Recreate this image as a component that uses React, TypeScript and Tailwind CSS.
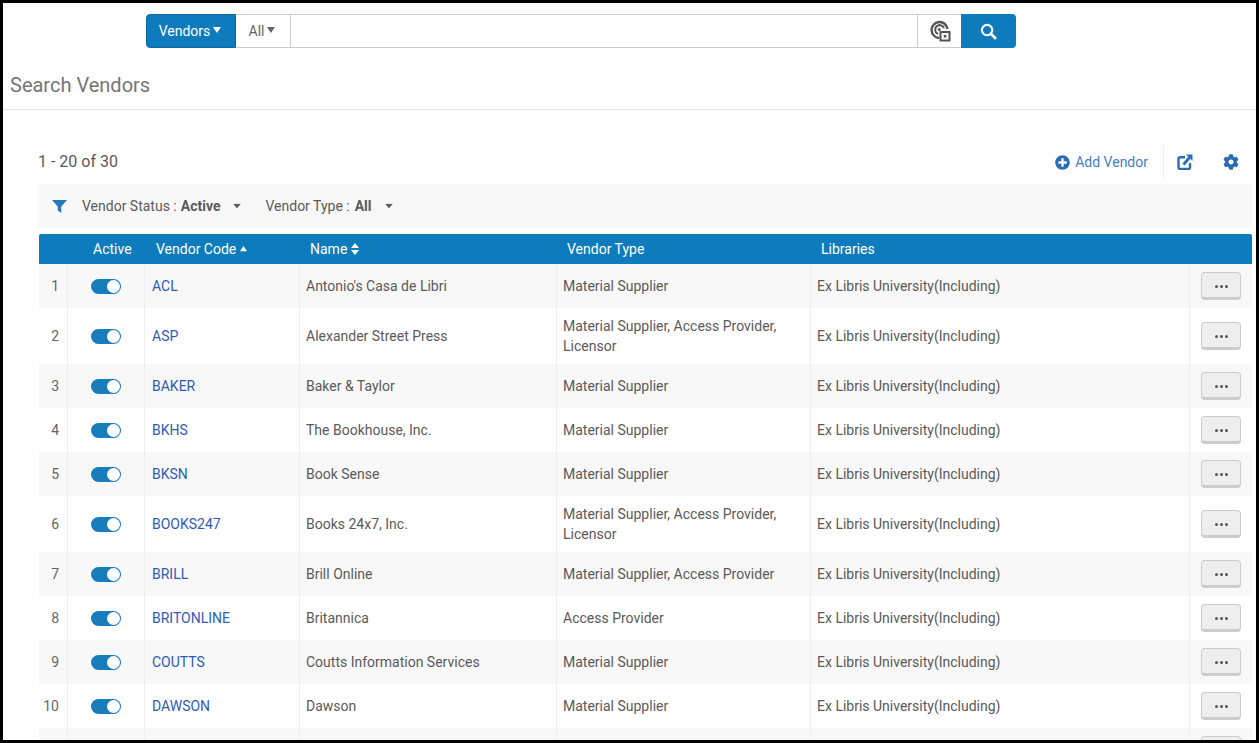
import React from "react";
import { FaCog, FaPlusCircle } from "react-icons/fa";

const rows: [string, string, string, string[], number][] = [
  ["1", "ACL", "Antonio's Casa de Libri", ["Material Supplier"], 44],
  ["2", "ASP", "Alexander Street Press", ["Material Supplier, Access Provider,", "Licensor"], 56],
  ["3", "BAKER", "Baker & Taylor", ["Material Supplier"], 44],
  ["4", "BKHS", "The Bookhouse, Inc.", ["Material Supplier"], 44],
  ["5", "BKSN", "Book Sense", ["Material Supplier"], 44],
  ["6", "BOOKS247", "Books 24x7, Inc.", ["Material Supplier, Access Provider,", "Licensor"], 56],
  ["7", "BRILL", "Brill Online", ["Material Supplier, Access Provider"], 44],
  ["8", "BRITONLINE", "Britannica", ["Access Provider"], 44],
  ["9", "COUTTS", "Coutts Information Services", ["Material Supplier"], 44],
  ["10", "DAWSON", "Dawson", ["Material Supplier"], 44],
  ["", "", "", [], 44],
];

const Caret = ({ className = "" }: { className?: string }) => (
  <svg viewBox="0 0 8 6" className={className} fill="currentColor"><path d="M0 0h8L4 6z" /></svg>
);

const cols = "grid grid-cols-[29px_77px_155px_257px_254px_379px_1fr]";

function Row({ r, i }: { r: (typeof rows)[number]; i: number }) {
  const [n, code, name, type, h] = r;
  const cell = "flex items-center border-r border-[#eeeeee] pl-[6px]";
  return (
    <div className={`${cols} ${i % 2 === 0 ? "bg-[#f8f8f8]" : "bg-white"} shrink-0`} style={{ height: h }}>
      <div className="flex items-center justify-end border-r border-[#eeeeee] pr-[8px] text-[#666666]">{n}</div>
      <div className="flex items-center justify-center border-r border-[#eeeeee] pr-[1px]">
        {code && (
          <div className="flex h-[15px] w-[30px] items-center justify-end rounded-full bg-[#1a7dbb] pr-[1px]">
            <div className="h-[13px] w-[13px] rounded-full bg-white" />
          </div>
        )}
      </div>
      <div className={`${cell} pl-[7px] text-[#2f5cb3]`}>{code}</div>
      <div className={cell}>{name}</div>
      <div className={`${cell} flex-col items-start justify-center leading-[20px]`}>
        {type.map((t) => (
          <div key={t}>{t}</div>
        ))}
      </div>
      <div className={cell}>{code && "Ex Libris University(Including)"}</div>
      <div className="flex items-center pl-[11px]">
        <button className="flex h-[28px] w-[40px] items-center justify-center gap-[2px] rounded-[4px] border border-b-[3px] border-[#cccccc] bg-[#eeeeee] pt-[2px]">
          {[0, 1, 2].map((d) => (
            <span key={d} className="h-[3px] w-[3px] rounded-full bg-[#555555]" />
          ))}
        </button>
      </div>
    </div>
  );
}

export default function App() {
  return (
    <div className="h-[743px] w-[1259px] overflow-hidden border-[3px] border-black bg-white font-['Roboto',sans-serif] text-[14px] text-[#5a5a5a]">
      <div className="flex h-[107px] flex-col border-b border-[#e3e3e3]">
        <div className="ml-[143px] mt-[11px] flex h-[34px] w-[870px] shrink-0">
          <div className="flex w-[90px] items-center justify-center gap-[3px] rounded-l-[4px] border border-[#0c6aa3] bg-[#0e7bbc] pr-[2px] text-white">
            Vendors
            <Caret className="mb-[3px] w-[8px]" />
          </div>
          <div className="flex w-[55px] items-center justify-center gap-[3px] border-y border-r border-[#cccccc] pr-[2px] text-[#666666]">
            All
            <Caret className="mb-[3px] w-[8px]" />
          </div>
          <div className="flex-1 border-y border-[#cccccc]" />
          <div className="flex w-[44px] items-center justify-center border-y border-l border-[#cccccc]">
            <svg viewBox="0 0 22 22" className="h-[22px] w-[22px]" fill="none" stroke="#555555">
              <path d="M10.5 18A8 8 0 1 1 18.5 9" strokeWidth="2.4" />
              <path d="M9 14A4.6 4.6 0 1 1 15 8" strokeWidth="2" />
              <circle cx="10.2" cy="9.4" r="1.5" fill="#555555" stroke="none" />
              <rect x="11.5" y="12" width="9" height="8.5" fill="white" strokeWidth="2" />
              <rect x="14.8" y="15" width="2.6" height="2.6" fill="#555555" stroke="none" />
            </svg>
          </div>
          <div className="flex w-[55px] items-center justify-center rounded-r-[4px] bg-[#0e7bbc]">
            <svg viewBox="0 0 18 18" className="h-[17px] w-[17px]" fill="none" stroke="white">
              <circle cx="7.5" cy="7.5" r="5.5" strokeWidth="2.2" />
              <path d="M11.5 11.5L16 16" strokeWidth="3" strokeLinecap="round" />
            </svg>
          </div>
        </div>
        <div className="ml-[7px] mt-[24px] text-[20px] leading-[26px] text-[#757575]">Search Vendors</div>
      </div>

      <div className="ml-[35px] mr-[4px]">
        <div className="flex h-[74px] items-center justify-between pt-[30px]">
          <div className="text-[16px] text-[#5a5a5a]">1 - 20 of 30</div>
          <div className="flex items-center pr-[12px] text-[#3f7fc1]">
            <div className="flex items-center gap-[5px] pr-[15px]">
              <FaPlusCircle className="h-[15px] w-[15px] text-[#2a6db3]" />
              Add Vendor
            </div>
            <div className="flex h-[34px] w-[42px] items-center justify-center border-l border-[#eeeeee] pl-[1px]">
              <svg viewBox="0 0 16 16" className="h-[16px] w-[16px]" fill="none" stroke="#2a6db3">
                <path d="M8 3.2H3a1.5 1.5 0 0 0-1.5 1.5v8.8A1.5 1.5 0 0 0 3 15h8.5a1.5 1.5 0 0 0 1.5-1.5V9" strokeWidth="2.4" />
                <path d="M6.5 10.5L12.5 3.5" strokeWidth="2.8" />
                <path d="M9 0.5h6.5v6.5z" fill="#2a6db3" stroke="none" />
              </svg>
            </div>
            <div className="flex w-[35px] items-center justify-end pr-[1px]">
              <FaCog className="h-[16px] w-[16px] text-[#2a6db3]" />
            </div>
          </div>
        </div>

        <div className="flex h-[44px] items-center bg-[#f8f8f8] pl-[14px]">
          <svg viewBox="0 0 15 13" className="h-[13px] w-[15px]" fill="#2a7ab8"><path d="M0 0h15L9.3 6.5V13L5.7 10.5v-4z" /></svg>
          <span className="ml-[15px]">Vendor Status : </span>
          <b className="ml-[4px] font-bold">Active</b>
          <Caret className="ml-[13px] w-[8px] scale-y-75" />
          <span className="ml-[24px]">Vendor Type : </span>
          <b className="ml-[5px] font-bold">All</b>
          <Caret className="ml-[13px] w-[8px] scale-y-75" />
        </div>

        <div className="ml-[1px] mt-[6px] flex flex-col">
          <div className={`${cols} h-[30px] shrink-0 items-center rounded-t-[2px] bg-[#0e7bbc] text-white`}>
            <div />
            <div className="pl-[25px]">Active</div>
            <div className="flex items-center gap-[4px] pl-[11px]">
              Vendor Code
              <svg viewBox="0 0 8 6" className="w-[7px]" fill="currentColor"><path d="M0 6h8L4 0z" /></svg>
            </div>
            <div className="flex items-center gap-[4px] pl-[10px]">
              Name
              <svg viewBox="0 0 8 14" className="h-[14px] w-[8px]" fill="currentColor"><path d="M0 6h8L4 1zM0 8h8l-4 5z" /></svg>
            </div>
            <div className="pl-[10px]">Vendor Type</div>
            <div className="pl-[10px]">Libraries</div>
            <div />
          </div>
          {rows.map((r, i) => (
            <Row key={i} r={r} i={i} />
          ))}
        </div>
      </div>
    </div>
  );
}
